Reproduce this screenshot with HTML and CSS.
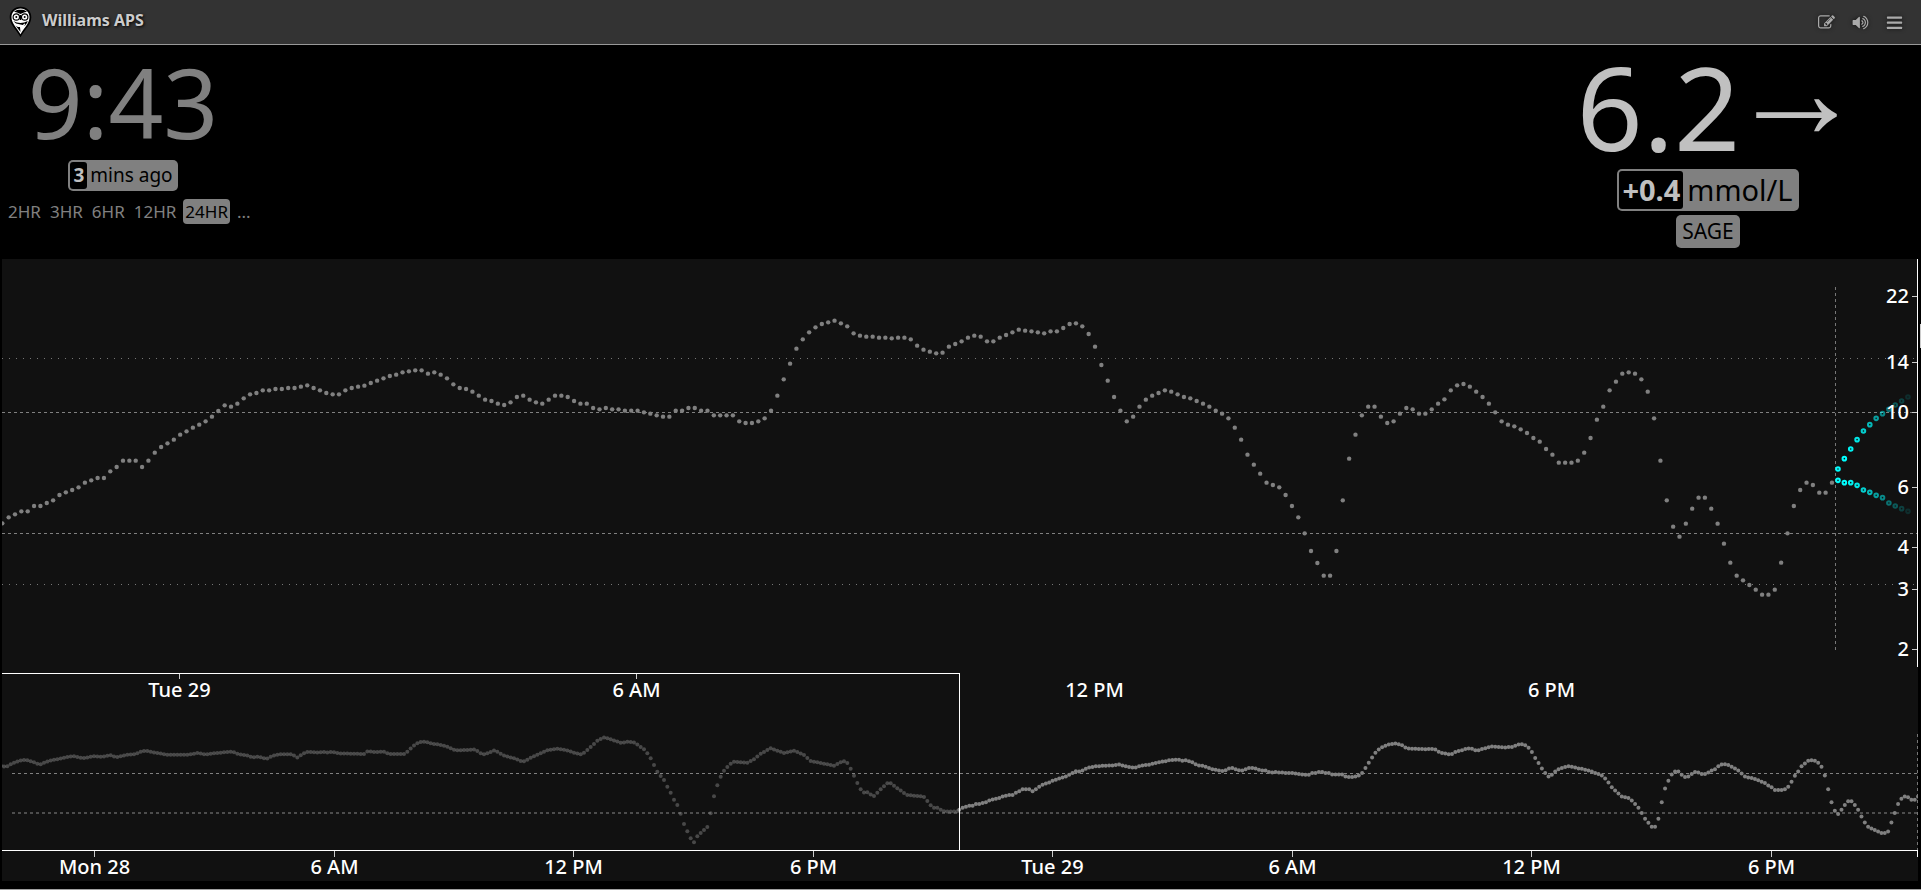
FILE: index.html
```html
<!DOCTYPE html>
<html lang="en">
<head>
<meta charset="utf-8">
<meta name="viewport" content="width=device-width, initial-scale=1">
<title>Williams APS</title>
<link rel="stylesheet" href="styles.css">
</head>
<body>
<header class="toolbar">
  <a class="brand" href="#">
    <svg class="brand-logo" viewBox="0 0 24 32" aria-hidden="true">
      <path d="M12 .8C5.600 .8 1.200 5 1.200 11.200c0 7.300 6 11.500 10.800 20 4.800-8.500 10.800-12.700 10.800-20C22.800 5 18.400 .8 12 .8z" fill="#000"/>
      <path d="M12 2.600c-5.200 0-9 3.500-9 8.700 0 6.300 5.100 10 9 17 3.900-7 9-10.700 9-17 0-5.200-3.800-8.700-9-8.700z" fill="#fff"/>
      <path d="M5.500 5.800C7.500 4 9.600 3.800 12 3.800s4.500.2 6.500 2l-3 .6L12 8 8.500 6.400z" fill="#000"/>
      <g fill="#fff" stroke="#000" stroke-width="1.200"><circle cx="7.800" cy="11" r="3.200"/><circle cx="16.200" cy="11" r="3.200"/></g>
      <circle cx="7.800" cy="11" r="1" fill="#000"/><circle cx="16.200" cy="11" r="1" fill="#000"/>
      <path d="M12 9v5" stroke="#000" stroke-width="1.400"/>
      <path d="M4.800 15c4.500 2.600 9.900 2.600 14.400 0-.5 2-1.500 3.300-2.700 4.600L12 18.600 7.500 17.600z" fill="#000"/>
      <path d="M7 19.500c1.500 1.500 3 1.700 4.500 1.500L12 26z" fill="#000"/>
      <path d="M16.500 17.800c-1.500 1.500-2.600 2.400-4.300 3" stroke="#fff" stroke-width="1.200" fill="none"/>
    </svg>
    <h1 class="brand-name">Williams APS</h1>
  </a>
  <nav class="tools" aria-label="Tools">
    <button class="tool" type="button" aria-label="Edit"><svg viewBox="0 0 1792 1792" aria-hidden="true"><path d="M888 1184l116-116-152-152-116 116v56h96v96h56zm440-720q-16-16-33 1l-350 350q-17 17-1 33t33-1l350-350q17-17 1-33zm80 594v190q0 119-84.500 203.500t-203.500 84.500h-832q-119 0-203.500-84.500t-84.500-203.500v-832q0-119 84.500-203.500t203.500-84.500h832q63 0 117 25 15 7 18 23 3 17-9 29l-49 49q-14 14-32 8-23-6-45-6h-832q-66 0-113 47t-47 113v832q0 66 47 113t113 47h832q66 0 113-47t47-113v-126q0-13 9-22l64-64q15-15 35-7t20 29zm-96-738l288 288-672 672h-288v-288zm444 132l-92 92-288-288 92-92q28-28 68-28t68 28l152 152q28 28 28 68t-28 68z"/></svg></button>
    <button class="tool" type="button" aria-label="Sound"><svg viewBox="0 0 1792 1792" aria-hidden="true"><path d="M832 352v1088q0 26-19 45t-45 19-45-19l-333-333h-262q-26 0-45-19t-19-45v-384q0-26 19-45t45-19h262l333-333q19-19 45-19t45 19 19 45zm384 544q0 76-42.500 141.500t-112.500 93.500q-10 5-25 5-26 0-45-18.500t-19-45.500q0-21 12-35.500t29-25 34-23 29-36 12-56.500-12-56.500-29-36-34-23-29-25-12-35.500q0-27 19-45.500t45-18.500q15 0 25 5 70 27 112.500 93t42.500 142zm256 0q0 153-85 282.500t-225 188.500q-13 5-25 5-27 0-46-19t-19-45q0-39 39-59 56-29 76-44 74-54 115.500-135.500t41.500-173.500-41.500-173.500-115.500-135.500q-20-15-76-44-39-20-39-59 0-26 19-45t45-19q13 0 26 5 140 59 225 188.500t85 282.500zm256 0q0 230-127 422.500t-338 283.500q-13 5-26 5-26 0-45-19t-19-45q0-36 39-59 7-4 22.500-10.500t22.500-10.500q46-25 82-51 123-91 192-227t69-289-69-289-192-227q-36-26-82-51-7-4-22.500-10.500t-22.500-10.500q-39-23-39-59 0-26 19-45t45-19q13 0 26 5 211 91 338 283.500t127 422.500z"/></svg></button>
    <button class="tool" type="button" aria-label="Menu"><svg viewBox="0 0 1792 1792" aria-hidden="true"><rect x="96" y="256" width="1600" height="240" rx="64"/><rect x="96" y="800" width="1600" height="240" rx="64"/><rect x="96" y="1344" width="1600" height="240" rx="64"/></svg></button>
  </nav>
</header>

<main class="page">
  <section class="status">
    <div class="time-status">
      <time class="clock">9:43</time>
      <span class="pill pill-age"><em class="pill-value">3</em><span class="pill-label">mins ago</span></span>
      <div class="hours" role="group" aria-label="Time range">
        <button class="hour" type="button">2HR</button>
        <button class="hour" type="button">3HR</button>
        <button class="hour" type="button">6HR</button>
        <button class="hour" type="button">12HR</button>
        <button class="hour is-selected" type="button" aria-pressed="true">24HR</button>
        <button class="hour" type="button">...</button>
      </div>
    </div>
    <div class="bg-status">
      <div class="bg-reading"><span class="bg-value">6.2</span><span class="bg-arrow">→</span></div>
      <span class="pill pill-delta"><em class="pill-value">+0.4</em><span class="pill-label">mmol/L</span></span>
      <span class="pill pill-sage">SAGE</span>
    </div>
  </section>
  <section class="chart-box">
    <svg id="chart" class="chart" viewBox="2 259 1916 622" role="img" aria-label="Glucose history"></svg>
  </section>
</main>
<div class="drawer-edge" aria-hidden="true"></div>
<script src="chart.js"></script>
</body>
</html>
```
FILE: styles.css
```css
* { box-sizing: border-box; }

body {
  margin: 0;
  min-height: 100vh;
  display: flex;
  flex-direction: column;
  background: #000;
  color: #808080;
  font-family: "Noto Sans", "Open Sans", sans-serif;
  border-bottom: 1px solid #a0a0a0;
  overflow-x: hidden;
}

button {
  margin: 0;
  padding: 0;
  border: 0;
  background: none;
  color: inherit;
  font: inherit;
  cursor: pointer;
}

.toolbar {
  display: flex;
  align-items: center;
  justify-content: space-between;
  height: 45px;
  padding: 0 18px 0 8px;
  background: #333;
  border-bottom: 1px solid #999;
}

.brand {
  display: flex;
  align-items: center;
  gap: 9px;
  color: #ccc;
  text-decoration: none;
}

.brand-logo {
  width: 25px;
  height: 32px;
}

.brand-name {
  margin: 0;
  padding-bottom: 5px;
  font-size: 16px;
  line-height: 20px;
  font-weight: 700;
  text-shadow: 1px 1px 3px #000;
}

.tools {
  display: flex;
  gap: 17px;
}

.tool {
  display: flex;
  filter: drop-shadow(0 0 2px #111);
}

.tool svg {
  width: 17px;
  height: 17px;
  fill: #aaa;
}

.page { flex: 1; }

.status {
  display: flex;
  align-items: flex-start;
  justify-content: space-between;
  height: 214px;
}

.time-status,
.bg-status {
  display: flex;
  flex-direction: column;
  align-items: center;
}

.time-status {
  width: 238px;
  padding: 4px 0 0 8px;
}

.clock {
  font-size: 96px;
  line-height: 105px;
}

.pill {
  display: inline-flex;
  padding: 2px;
  border-radius: 5px;
  background: #808080;
  color: #000;
}

.pill-value {
  border-radius: 3px;
  background: #000;
  color: #c0c0c0;
  font-style: normal;
  font-weight: 700;
}

.pill-age {
  margin-top: 6px;
  font-size: 19px;
  line-height: 27px;
}

.pill-age .pill-value { padding: 0 3px; }
.pill-age .pill-label { padding: 0 3px; }

.hours {
  display: flex;
  align-self: flex-start;
  gap: 9px;
  margin-top: 8px;
  font-size: 17px;
  line-height: 25px;
  white-space: nowrap;
}

.hour.is-selected {
  margin: 0 -2px;
  padding: 0 2px;
  border-radius: 4px;
  background: #808080;
  color: #000;
}

.bg-status { width: 426px; }

.bg-reading {
  display: flex;
  align-items: flex-start;
  color: #c0c0c0;
}

.bg-value {
  font-size: 116px;
  line-height: 122px;
}

.bg-arrow {
  margin: 0 -25px 0 -12px;
  font-family: "Liberation Sans", sans-serif;
  font-size: 136px;
  line-height: 92px;
}

.pill-delta {
  margin-top: 2px;
  font-size: 29px;
  line-height: 38px;
}

.pill-delta .pill-value { padding: 0 3px; }
.pill-delta .pill-label { padding: 0 4px; }

.pill-sage {
  margin-top: 4px;
  padding: 2px 6px;
  font-size: 21px;
  line-height: 29px;
}

.chart-box { padding: 0 3px 0 2px; }

.chart {
  display: block;
  width: 100%;
  height: auto;
  background: #111;
}

.axis-label {
  fill: #fff;
  font-size: 20px;
  font-weight: 500;
}

.axis-label-y { text-anchor: end; }
.axis-label-x { text-anchor: middle; }

.axis-line { stroke: #fff; }
.axis-tick { stroke: #ccc; }

.target-line {
  stroke: #808080;
  stroke-dasharray: 3 3;
}

.target-line-soft { stroke: #4d4d4d; stroke-width: 2; stroke-dasharray: 3 3; }
.limit-line { stroke: #777; stroke-dasharray: 1 6; }
.now-line { stroke: #777; stroke-dasharray: 3 3; }

.reading { fill: #808080; }
.reading-old { fill: #808080; fill-opacity: 0.5; }
.forecast { fill: none; stroke: #0ff; stroke-width: 2; }

.drawer-edge {
  position: absolute;
  top: 324px;
  right: 0;
  width: 1px;
  height: 24px;
  background: #ccc;
}
```
FILE: chart.js
```javascript
const svg = document.getElementById('chart');

function add(tag, cls, attrs, text) {
  const el = document.createElementNS('http://www.w3.org/2000/svg', tag);
  el.setAttribute('class', cls);
  for (const key in attrs) el.setAttribute(key, attrs[key]);
  if (text) el.textContent = text;
  svg.appendChild(el);
}
function line(cls, x1, y1, x2, y2) {
  add('line', cls, { x1, y1, x2, y2 });
}

// Last 24 hours, one sample every five minutes, in thirds of a pixel below y = 300.
const day = [
  670,652,643,634,634,618,618,609,601,585,577,570,562,548,541,534,534,514,501,482,
  482,482,501,482,458,441,430,419,404,394,383,374,364,350,333,316,320,311,295,283,
  279,271,271,267,267,264,264,260,256,264,271,279,283,283,271,264,260,257,249,242,
  235,228,224,217,214,211,211,221,217,224,235,253,264,267,275,287,299,303,311,315,
  307,291,287,299,307,311,299,287,287,291,303,311,311,324,328,324,328,328,332,332,
  332,337,341,346,350,350,332,332,324,324,332,332,346,346,346,346,364,369,369,364,
  355,332,287,238,191,146,118,97,82,72,67,62,70,79,100,107,110,110,113,113,
  115,113,113,118,137,149,155,160,158,140,132,124,113,107,110,124,124,113,105,97,
  89,92,94,97,100,94,94,84,72,70,79,102,140,195,242,291,332,364,350,320,
  299,287,279,271,275,283,291,295,303,311,320,332,341,355,383,419,464,494,521,548,
  555,562,585,618,652,700,753,789,827,827,753,601,476,404,346,320,320,350,369,364,
  341,324,328,341,341,328,311,
  298,271,256,252,260,275,291,311,337,364,374,379,388,399,414,425,447,464,488,488,
  488,482,458,414,359,320,271,245,221,217,221,238,275,355,482,601,680,710,671,626,
  593,593,626,671,731,788,827,841,855,869,884,884,869,788,700,618,570,548,555,578,
  578,548
];

// Turning points of the day before, in thirds of a pixel from (0, 660).
const before = [
  [7,318],[17,321],[27,316],[37,310],[47,306],[57,303],[67,300],[77,300],[87,302],[97,305],
  [107,309],[117,314],[127,311],[137,306],[157,300],[177,297],[197,292],[217,289],[227,289],
  [237,293],[257,294],[267,291],[287,288],[297,291],[317,289],[327,285],[337,287],[347,292],
  [357,290],[377,285],[407,282],[427,273],[447,273],[457,277],[487,281],[497,284],[567,284],
  [597,278],[607,283],[627,283],[637,280],[697,275],[717,283],[747,287],[757,293],[767,290],
  [787,292],[797,298],[817,288],[837,283],[877,283],[887,290],[895,294],[905,282],[925,275],
  [957,278],[967,275],[985,278],[995,275],[1015,280],[1095,282],[1103,273],[1123,276],
  [1155,275],[1165,282],[1215,282],[1225,272],[1235,263],[1245,254],[1255,248],[1265,245],
  [1275,245],[1295,251],[1315,253],[1345,261],[1365,271],[1405,270],[1425,268],[1440,279],
  [1454,283],[1484,271],[1514,288],[1544,295],[1564,304],[1574,304],[1594,292],[1644,270],
  [1674,266],[1704,272],[1724,279],[1744,283],[1754,277],[1784,250],[1794,240],[1814,232],
  [1844,242],[1864,249],[1884,245],[1904,248],[1932,268],[1942,280],[1952,295],[1962,315],
  [1972,335],[1982,348],[1992,360],[2002,380],[2012,398],[2022,419],[2032,435],[2042,461],
  [2052,492],[2062,514],[2072,535],[2082,547],[2092,529],[2102,519],[2112,510],[2122,501],
  [2132,460],[2142,409],[2152,376],[2162,350],[2172,332],[2182,321],[2192,311],[2202,305],
  [2242,308],[2262,298],[2282,281],[2312,265],[2352,279],[2382,272],[2412,285],[2432,303],
  [2462,309],[2502,317],[2530,303],[2542,309],[2551,324],[2561,345],[2571,367],[2581,387],
  [2591,398],[2601,396],[2621,409],[2641,389],[2661,370],[2671,369],[2691,384],[2721,405],
  [2771,410],[2781,422],[2791,435],[2801,443],[2811,443],[2831,454],[2870,455],[2880,449]
];

// Target and limit lines.
line('limit-line', 2, 358.5, 1918, 358.5);
line('limit-line', 2, 584.5, 1918, 584.5);
line('target-line', 2, 412.5, 1918, 412.5);
line('target-line', 2, 533.5, 1918, 533.5);
line('target-line', 12, 773.5, 1918, 773.5);
line('target-line-soft', 12, 813, 1918, 813);
line('now-line', 1835.5, 287, 1835.5, 650);
line('now-line', 1917.5, 734, 1917.5, 850);

// Overview of the day before.
let seg = 0;
for (let x = 2; x < 2876; x += 10) {
  while (before[seg + 1][0] < x) seg++;
  const [x0, y0] = before[seg];
  const [x1, y1] = before[seg + 1];
  const y = y0 + (y1 - y0) * (x - x0) / (x1 - x0);
  add('circle', 'reading-old', { cx: x / 3, cy: 660 + y / 3, r: 2 });
}

// The last day, in the main chart and again in the overview.
day.forEach((d, i) => {
  const y = 300 + d / 3;
  add('circle', 'reading', { cx: 2.3 + i * 6.353, cy: y, r: 2.2 });
  add('circle', 'reading', { cx: 959.3 + i * 3.329, cy: 773.5 + (y - 412.5) * 0.327, r: 2 });
});

// Forecast cone, fading with distance.
const upper = [567,536,507,479,453,434,415,401,388,375,363,351];
const lower = [601,608,608,616,630,637,646,653,669,678,686,694];
const fade = [1,1,0.95,0.9,0.8,0.7,0.6,0.5,0.4,0.3,0.2,0.12];
[upper, lower].forEach(points => points.forEach((d, i) => {
  add('circle', 'forecast', { cx: 1838 + i * 6.36, cy: 280 + d / 3, r: 1.8, opacity: fade[i] });
}));

// Value axis.
line('axis-line', 1917.5, 259, 1917.5, 667);
[[22, 296.5], [14, 362.5], [10, 412.5], [6, 487.5], [4, 547.5], [3, 589.5], [2, 649.5]].forEach(([v, y]) => {
  line('axis-tick', 1912, y, 1917, y);
  add('text', 'axis-label axis-label-y', { x: 1909, y: y + 6 }, String(v));
});

// Time axes and the overview window.
[['Tue 29', 179.5], ['6 AM', 636.5], ['12 PM', 1094.5], ['6 PM', 1551.5]].forEach(([t, x]) => {
  if (x < 960) line('axis-tick', x, 674, x, 679);
  add('text', 'axis-label axis-label-x', { x, y: 697 }, t);
});
line('axis-line', 2, 673.5, 960, 673.5);
line('axis-line', 959.5, 673, 959.5, 850);
line('axis-line', 2, 850.5, 1918, 850.5);
line('axis-line', 1917.5, 850, 1917.5, 857);
[['Mon 28', 94.5], ['6 AM', 334.5], ['12 PM', 573.5], ['6 PM', 813.5], ['Tue 29', 1052.5], ['6 AM', 1292.5], ['12 PM', 1531.5], ['6 PM', 1771.5]].forEach(([t, x]) => {
  line('axis-tick', x, 851, x, 857);
  add('text', 'axis-label axis-label-x', { x, y: 874 }, t);
});
```
